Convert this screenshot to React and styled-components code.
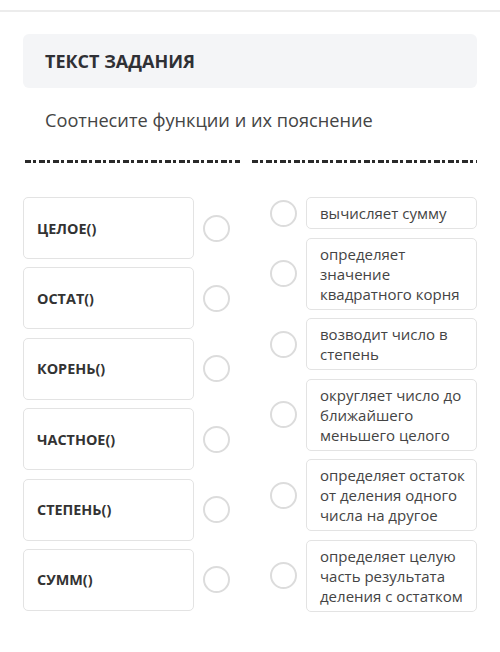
import React from 'react';
import styled, { createGlobalStyle } from 'styled-components';

const GlobalStyle = createGlobalStyle`
    body {
        margin: 0;
        background: #fff;
        font-family: "Open Sans", "Liberation Sans", sans-serif;
        color: #333;
    }
`;

const TopBar = styled.div`
    height: 10px;
    border-bottom: 2px solid #ececec;
`;

const Content = styled.div`
    padding: 0 23px;
    margin-top: 22px;
`;

const TaskHeader = styled.div`
    height: 54px;
    background: #f4f5f7;
    border-radius: 6px;
    display: flex;
    align-items: center;
    padding-left: 22px;
    font-size: 18px;
    font-weight: 700;
    color: #2f3035;
`;

const Instruction = styled.p`
    margin: 20px 0 0;
    padding-left: 22px;
    font-size: 18.2px;
    line-height: 24px;
    color: #444;
`;

const Cutoff = styled.div`
    display: flex;
    gap: 12px;
    margin: 28px 0 0 2px;
    height: 3px;
`;

const CutSegment = styled.div`
    width: ${p => p.$width}px;
    height: 3px;
    background: repeating-linear-gradient(
        90deg,
        #2a2a2a 0 6px,
        transparent 6px 8px,
        #2a2a2a 8px 11px,
        transparent 11px 14px
    );
`;

const Board = styled.div`
    display: grid;
    grid-template-columns: 1fr 1fr;
    column-gap: 40px;
    margin-top: 34px;
`;

const Column = styled.div`
    display: flex;
    flex-direction: column;
    gap: ${p => p.$gap}px;
`;

const Row = styled.div`
    display: flex;
    align-items: center;
    gap: ${p => p.$gap}px;
`;

const FuncCard = styled.div`
    box-sizing: border-box;
    width: 171px;
    height: 62px;
    border: 1.5px solid #e3e3e3;
    border-radius: 5px;
    display: flex;
    align-items: center;
    padding-left: 13px;
    font-size: 14.4px;
    font-weight: 700;
    color: #333;
`;

const DescCard = styled.div`
    box-sizing: border-box;
    width: 171px;
    border: 1.5px solid #e3e3e3;
    border-radius: 5px;
    padding: 5px 8px 5px 13px;
    font-size: 15px;
    line-height: 20px;
    color: #444;
`;

const Radio = styled.div`
    box-sizing: border-box;
    flex: none;
    width: 27px;
    height: 27px;
    border-radius: 50%;
    border: 2.5px solid #dcdcdc;
`;

const functions = ['ЦЕЛОЕ()', 'ОСТАТ()', 'КОРЕНЬ()', 'ЧАСТНОЕ()', 'СТЕПЕНЬ()', 'СУММ()'];

const descriptions = [
    'вычисляет сумму',
    'определяет значение квадратного корня',
    'возводит число в степень',
    'округляет число до ближайшего меньшего целого',
    'определяет остаток от деления одного числа на другое',
    'определяет целую часть результата деления с остатком',
];

export default function App() {
    return (
        <>
            <GlobalStyle />
            <TopBar />
            <Content>
                <TaskHeader>ТЕКСТ ЗАДАНИЯ</TaskHeader>
                <Instruction>Соотнесите функции и их пояснение</Instruction>
                <Cutoff>
                    <CutSegment $width={215} />
                    <CutSegment $width={225} />
                </Cutoff>
                <Board>
                    <Column $gap={8.4}>
                        {functions.map(f => (
                            <Row key={f} $gap={9}>
                                <FuncCard>{f}</FuncCard>
                                <Radio />
                            </Row>
                        ))}
                    </Column>
                    <Column $gap={8.5}>
                        {descriptions.map(d => (
                            <Row key={d} $gap={9}>
                                <Radio />
                                <DescCard>{d}</DescCard>
                            </Row>
                        ))}
                    </Column>
                </Board>
            </Content>
        </>
    );
}
